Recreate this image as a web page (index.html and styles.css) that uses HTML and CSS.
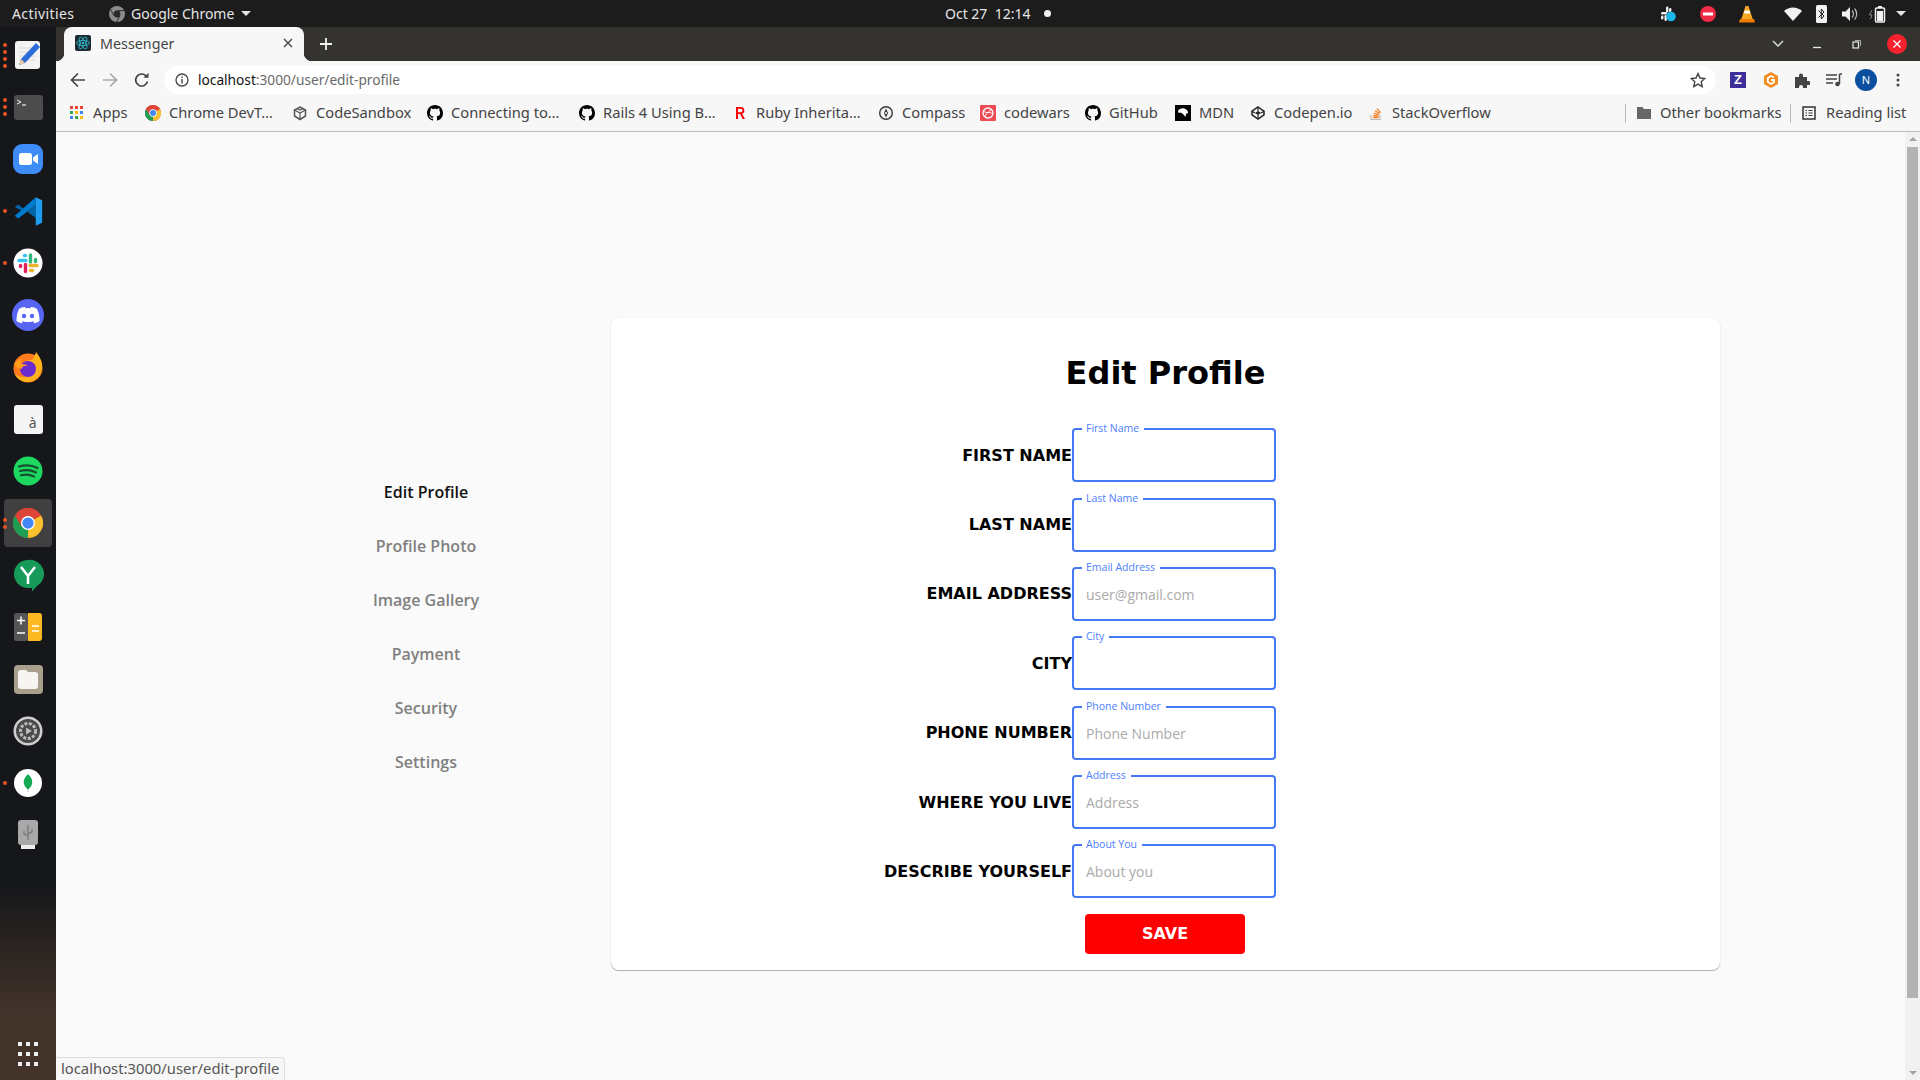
FILE: index.html
```html
<!DOCTYPE html>
<html lang="en">
<head>
    <meta charset="UTF-8">
    <meta name="viewport" content="width=device-width, initial-scale=1.0">
    <title>Messenger</title>
    <link rel="stylesheet" href="styles.css">
</head>
<body>
    <svg class="defs" width="0" height="0">
        <symbol id="gh" viewBox="0 0 16 16">
            <path d="M8 0C3.58 0 0 3.58 0 8c0 3.54 2.29 6.53 5.47 7.59.4.07.55-.17.55-.38 0-.19-.01-.82-.01-1.49-2.01.37-2.53-.49-2.69-.94-.09-.23-.48-.94-.82-1.13-.28-.15-.68-.52-.01-.53.63-.01 1.08.58 1.23.82.72 1.21 1.87.87 2.33.66.07-.52.28-.87.51-1.07-1.78-.2-3.64-.89-3.64-3.95 0-.87.31-1.59.82-2.15-.08-.2-.36-1.02.08-2.12 0 0 .67-.21 2.2.82.64-.18 1.32-.27 2-.27.68 0 1.36.09 2 .27 1.53-1.04 2.2-.82 2.2-.82.44 1.1.16 1.92.08 2.12.51.56.82 1.27.82 2.15 0 3.07-1.87 3.75-3.65 3.95.29.25.54.73.54 1.48 0 1.07-.01 1.93-.01 2.2 0 .21.15.46.55.38A8.013 8.013 0 0016 8c0-4.42-3.58-8-8-8z"/>
        </symbol>
        <symbol id="chrome" viewBox="0 0 32 32">
            <circle cx="16" cy="16" r="16" fill="#db4437"/>
            <path d="M16 16 29.9 8A16 16 0 0 1 16 32Z" fill="#fbc02d"/>
            <path d="M16 16 16 32A16 16 0 0 1 2.1 8Z" fill="#1e9e52"/>
            <path d="M16 8H29.9A16 16 0 0 0 2.1 8L9 20Z" fill="#db4437"/>
            <circle cx="16" cy="16" r="7.5" fill="#fff"/>
            <circle cx="16" cy="16" r="6" fill="#4285f4"/>
        </symbol>
    </svg>

    <header class="topbar">
        <span class="activities">Activities</span>
        <span class="appmenu">
            <svg class="appicon" width="18" height="18" viewBox="0 0 18 18"><circle cx="9" cy="9" r="8" fill="#8d8d8d"/><circle cx="9" cy="9" r="3.4" fill="#2a2a2a"/><path d="M9 5.6h7M6 10.7 2.6 4.5M12 10.7 8.5 17" stroke="#2a2a2a" stroke-width="1"/></svg>
            Google Chrome
            <i class="caret"></i>
        </span>
        <span class="clock">Oct 27&nbsp; 12:14<i class="clockdot"></i></span>
        <span class="tray">
            <svg class="t-slack" width="18" height="18" viewBox="0 0 18 18"><g fill="#eee"><rect x="2" y="7" width="6" height="2.4" rx="1.2"/><rect x="7" y="1.5" width="2.4" height="6" rx="1.2"/><rect x="10" y="3" width="2.4" height="4" rx="1.2"/><rect x="2" y="10.500" width="2.400" height="4" rx="1.2"/><rect x="5.500" y="10" width="2.400" height="6" rx="1.2"/></g><circle cx="12" cy="11.500" r="4.800" fill="#1ab7ea"/></svg>
            <svg class="t-block" width="16" height="16" viewBox="0 0 16 16"><circle cx="8" cy="8" r="8" fill="#ef2b45"/><rect x="3" y="6.500" width="10" height="3" fill="#fff"/></svg>
            <svg class="t-vlc" width="16" height="18" viewBox="0 0 16 18"><path d="M6.500 1h3l4.500 14H2Z" fill="#f5a623"/><path d="M5.700 5.500h4.600l1 3H4.700Z" fill="#fff"/><path d="M1 14h14l1 3.500H0Z" fill="#ef7d00"/></svg>
            <svg class="t-wifi" width="18" height="14" viewBox="0 0 18 14"><path d="M0 4a13 13 0 0 1 18 0L9 14Z" fill="#f2f2f2"/></svg>
            <svg class="t-bt" width="11" height="18" viewBox="0 0 11 18"><rect width="11" height="18" rx="1.500" fill="#f2f2f2"/><path d="M2.500 5.500 8 11l-2.700 3V4L8 7l-5.500 5.500" fill="none" stroke="#222" stroke-width="1"/></svg>
            <svg class="t-vol" width="16" height="14" viewBox="0 0 16 14"><path d="M0 4.500h3.500L8 0v14L3.500 9.500H0Z" fill="#f2f2f2"/><path d="M10 3.500a5 5 0 0 1 0 7M12.500 1.500a8 8 0 0 1 0 11" fill="none" stroke="#bbb" stroke-width="1.200"/></svg>
            <svg class="t-bat" width="18" height="18" viewBox="0 0 18 18"><path d="M3 5 .5 10H3L1.500 14" fill="none" stroke="#888" stroke-width="1"/><rect x="6.500" y="3" width="9" height="14" rx="1" fill="none" stroke="#f2f2f2" stroke-width="1.500"/><rect x="9" y="1" width="4" height="2" fill="#f2f2f2"/><rect x="8" y="6" width="6" height="10" fill="#f2f2f2"/></svg>
            <i class="caret t-caret"></i>
        </span>
    </header>

    <div class="desktop">
        <nav class="dock">
            <div class="dockitem">
                <span class="dots d4"><i></i><i></i><i></i><i></i></span>
                <svg width="38" height="38" viewBox="0 0 38 38"><rect x="6" y="5" width="25" height="28" rx="3" fill="#f3f3f3"/><path d="M10 12h16M10 16h16M10 20h16M10 24h16" stroke="#d8d8d8"/><path d="M27 7l4 4-15 16-6 2 2-6Z" fill="#2a6bd8"/><path d="M10 29l2-6 4 4Z" fill="#edc9a0"/></svg>
            </div>
            <div class="dockitem">
                <span class="dots d3"><i></i><i></i><i></i></span>
                <svg width="38" height="38" viewBox="0 0 38 38"><rect x="5" y="7" width="29" height="25" rx="3" fill="#4c4c4c"/><path d="M8 12l4 2-4 2" fill="none" stroke="#eee"/><path d="M13 17h4" stroke="#eee" stroke-width="1.200"/></svg>
            </div>
            <div class="dockitem">
                <svg width="38" height="38" viewBox="0 0 38 38"><rect x="4" y="4" width="30" height="30" rx="9" fill="#3d8cf7"/><rect x="10" y="13" width="13" height="12" rx="2.500" fill="#fff"/><path d="M24 17.500 29 14v10l-5-3.500Z" fill="#fff"/></svg>
            </div>
            <div class="dockitem">
                <span class="dots d1"><i></i></span>
                <svg width="29" height="29" viewBox="0 0 100 100"><path d="M75 99V72L14 26 3 35 32 50 3 65 14 74 75 28V1Z" fill="#0065a9"/><path d="M75 1V28L14 74 3 65Z" fill="#007acc"/><path d="M75 1 97 11V89L75 99Z" fill="#1f9cf0"/></svg>
            </div>
            <div class="dockitem">
                <span class="dots d1"><i></i></span>
                <svg width="38" height="38" viewBox="0 0 38 38"><circle cx="19" cy="19" r="14.500" fill="#fff"/><g stroke-width="3.400" stroke-linecap="round"><path d="M21.500 11v7" stroke="#2eb67d"/><path d="M26.500 15.500v2" stroke="#2eb67d"/><path d="M21 21.500h7" stroke="#ecb22e"/><path d="M21.500 26.500h2" stroke="#ecb22e"/><path d="M16.500 20.500v7" stroke="#e01e5a"/><path d="M11.500 21.500v1" stroke="#e01e5a"/><path d="M10 16.500h7" stroke="#36c5f0"/><path d="M15.500 11.500h1" stroke="#36c5f0"/></g></svg>
            </div>
            <div class="dockitem">
                <svg width="38" height="38" viewBox="0 0 38 38"><circle cx="19" cy="19" r="16" fill="#5865f2"/><path d="M10 13c3-2 5-2 6-2l.6 1.200a14 14 0 0 1 4.800 0L22 11c1 0 3 0 6 2 2 4 2.500 8 2.500 12-2 1.500-3.800 2-5.200 2.200l-1-1.800 1.500-.9c-4 2-9.600 2-13.600 0l1.500.9-1 1.800c-1.400-.2-3.200-.7-5.200-2.200 0-4 .5-8 2.500-12Z" fill="#fff"/><circle cx="15" cy="20" r="2.200" fill="#5865f2"/><circle cx="23" cy="20" r="2.200" fill="#5865f2"/></svg>
            </div>
            <div class="dockitem">
                <svg width="38" height="38" viewBox="0 0 38 38"><circle cx="19" cy="20" r="14.500" fill="#ff7a1a"/><path d="M27 4c3 4 7 9 6 16-1 9-8 14-14 14S8 31 5 25c3 4 9 5 13 3s5-9 1-12l-5 1c1-4 5-5 9-5 2-2 3-5 4-8Z" fill="#ffb21c"/><circle cx="19" cy="21" r="8" fill="#6a2ccf"/><path d="M5 16c2-3 5-5 8-5-1 2-1 3 0 5 2 0 4 .5 6 1.500-4 0-6 1-6 3-4 1-6-1-8-4.500Z" fill="#ff9a1a"/></svg>
            </div>
            <div class="dockitem">
                <span class="tile">à</span>
            </div>
            <div class="dockitem">
                <svg width="38" height="38" viewBox="0 0 38 38"><circle cx="19" cy="19" r="14.500" fill="#1ed760"/><path d="M10 14.500c6-1.700 13-1.300 18.500 1.500M11 19c5.500-1.400 11-1 16 1.400M12 23.300c4.500-1.100 9-.8 13 1.200" fill="none" stroke="#14502e" stroke-width="2.200" stroke-linecap="round"/></svg>
            </div>
            <div class="dockitem active">
                <span class="dots d2"><i></i><i></i></span>
                <svg width="30" height="30"><use href="#chrome"/></svg>
            </div>
            <div class="dockitem">
                <svg width="38" height="38" viewBox="0 0 38 38"><path d="M19 4a14 14 0 0 0 0 28h4v3.500l5-5.500A14 14 0 0 0 19 4Z" fill="#169a5a"/><path d="M12 11l7 9 7-9M19 20v8" fill="none" stroke="#fff" stroke-width="2.500"/></svg>
            </div>
            <div class="dockitem">
                <svg width="38" height="38" viewBox="0 0 38 38"><rect x="5" y="5" width="14" height="28" rx="2.500" fill="#555"/><path d="M19 5h11a3 3 0 0 1 3 3v22a3 3 0 0 1-3 3H19Z" fill="#fdb921"/><path d="M8 12.500h8M12 8.500v8M8 25h8M23 18h7M23 23h7" stroke="#fff" stroke-width="1.500"/></svg>
            </div>
            <div class="dockitem">
                <svg width="38" height="38" viewBox="0 0 38 38"><rect x="5" y="5" width="29" height="29" rx="4" fill="#a89f8c"/><path d="M9 13a3 3 0 0 1 3-3h5l2 2h7a3 3 0 0 1 3 3v11a3 3 0 0 1-3 3H12a3 3 0 0 1-3-3Z" fill="#f7f5f1"/></svg>
            </div>
            <div class="dockitem">
                <svg width="38" height="38" viewBox="0 0 38 38"><circle cx="19" cy="19" r="14.500" fill="#cfcfcf"/><circle cx="19" cy="19" r="12" fill="#4a4a4a"/><circle cx="19" cy="19" r="7.500" fill="none" stroke="#bbb" stroke-width="3" stroke-dasharray="3 1.500"/><path d="M17 15.500 23 19l-6 3.500Z" fill="#bbb"/></svg>
            </div>
            <div class="dockitem">
                <span class="dots d1"><i></i></span>
                <svg width="38" height="38" viewBox="0 0 38 38"><circle cx="19" cy="19" r="14" fill="#fff"/><path d="M19 10c3 3 5 6 4 10-.7 3-3 4.500-4 5.500-1-1-3.300-2.500-4-5.500-1-4 1-7 4-10Z" fill="#13aa52"/><path d="M19 25v3" stroke="#b8c4c2"/></svg>
            </div>
            <div class="dockitem">
                <svg width="38" height="38" viewBox="0 0 38 38"><rect x="9" y="4" width="20" height="25" rx="3" fill="#a8a8a8"/><rect x="12" y="29" width="14" height="4" fill="#eee"/><path d="M19 9v15M19 20l-4-2v-3M19 18l4-2v-3" fill="none" stroke="#7d7d7d" stroke-width="1.500"/></svg>
            </div>
            <div class="appgrid">
                <i></i><i></i><i></i><i></i><i></i><i></i><i></i><i></i><i></i>
            </div>
        </nav>

        <div class="window">
            <div class="tabstrip">
                <div class="tab">
                    <svg class="favicon" width="16" height="16" viewBox="0 0 16 16"><rect width="16" height="16" rx="2" fill="#1d2a30"/><g fill="none" stroke="#2fc0d8" stroke-width=".8"><ellipse cx="8" cy="8" rx="6.500" ry="2.600"/><ellipse cx="8" cy="8" rx="6.500" ry="2.600" transform="rotate(60 8 8)"/><ellipse cx="8" cy="8" rx="6.500" ry="2.600" transform="rotate(120 8 8)"/></g><circle cx="8" cy="8" r="1.200" fill="#2fc0d8"/></svg>
                    <span class="tabtitle">Messenger</span>
                    <svg class="tabclose" width="10" height="10" viewBox="0 0 10 10"><path d="M1 1l8 8M9 1l-8 8" stroke="#444" stroke-width="1.400"/></svg>
                </div>
                <svg class="newtab" width="14" height="14" viewBox="0 0 14 14"><path d="M7 1v12M1 7h12" stroke="#f2f2f2" stroke-width="1.800"/></svg>
                <span class="winctl">
                    <svg class="w-chev" width="12" height="8" viewBox="0 0 12 8"><path d="M1 1l5 5 5-5" fill="none" stroke="#e0e0e0" stroke-width="1.400"/></svg>
                    <svg class="w-min" width="10" height="10" viewBox="0 0 10 10"><path d="M1 8.500h8" stroke="#e8e8e8" stroke-width="1.300"/></svg>
                    <svg class="w-max" width="10" height="10" viewBox="0 0 10 10"><rect x="1" y="3" width="5.500" height="6" fill="none" stroke="#e8e8e8" stroke-width="1.200"/><path d="M3 1.500h5.500V7" fill="none" stroke="#aaa"/></svg>
                    <span class="w-close"><svg width="10" height="10" viewBox="0 0 10 10"><path d="M1.500 1.500l7 7M8.500 1.500l-7 7" stroke="#fff" stroke-width="1.400"/></svg></span>
                </span>
            </div>

            <div class="toolbar">
                <svg class="tb-back" width="16" height="16" viewBox="0 0 16 16"><path d="M15 8H2M8 1.500 1.500 8 8 14.500" fill="none" stroke="#444" stroke-width="1.700"/></svg>
                <svg class="tb-fwd" width="16" height="16" viewBox="0 0 16 16"><path d="M1 8h13M8 1.500 14.500 8 8 14.500" fill="none" stroke="#aaa" stroke-width="1.700"/></svg>
                <svg class="tb-reload" width="16" height="16" viewBox="0 0 16 16"><path d="M13.500 9.500A6 6 0 1 1 12 3.800" fill="none" stroke="#444" stroke-width="1.700"/><path d="M9.500 5.800h5v-5Z" fill="#444"/></svg>
                <div class="omnibox">
                    <svg class="infoicon" width="14" height="14" viewBox="0 0 14 14"><circle cx="7" cy="7" r="6" fill="none" stroke="#444" stroke-width="1.300"/><path d="M7 6v4.500M7 3.500v1.400" stroke="#444" stroke-width="1.400"/></svg>
                    <span class="url"><b>localhost</b>:3000/user/edit-profile</span>
                    <svg class="star" width="16" height="16" viewBox="0 0 16 16"><path d="M8 1.500l2 4.500 4.800.5-3.600 3.200 1 4.800L8 12.100l-4.200 2.400 1-4.800L1.200 6.500 6 6Z" fill="none" stroke="#444" stroke-width="1.400"/></svg>
                </div>
                <span class="ext-z">Z</span>
                <svg class="ext-g" width="16" height="18" viewBox="0 0 16 18"><path d="M8 1l7 4v8l-7 4-7-4V5Z" fill="#f58a1f"/><path d="M11 6.500 8 5 4.800 7v4L8 13l3-1.800V9H8" fill="none" stroke="#fff" stroke-width="1.800"/></svg>
                <svg class="ext-p" width="16" height="16" viewBox="0 0 16 16"><path d="M1 5h4V3.500a2 2 0 0 1 4 0V5h4v4h1.500a2 2 0 0 1 0 4H13v3H9v-1a2 2 0 0 0-4 0v1H1Z" fill="#444"/></svg>
                <svg class="ext-m" width="16" height="14" viewBox="0 0 16 14"><path d="M0 2h11M0 6h11M0 10h7" stroke="#444" stroke-width="1.500"/><path d="M13.500 1v10" stroke="#444" stroke-width="1.500"/><path d="M13.500 1H16" stroke="#444" stroke-width="1.500"/><circle cx="11.500" cy="11" r="2.300" fill="#444"/></svg>
                <span class="avatar">N</span>
                <svg class="menu" width="4" height="14" viewBox="0 0 4 14"><circle cx="2" cy="2" r="1.500" fill="#444"/><circle cx="2" cy="7" r="1.500" fill="#444"/><circle cx="2" cy="12" r="1.500" fill="#444"/></svg>
            </div>

            <div class="bookmarks">
                <div class="bm apps">
                    <svg width="14" height="14" viewBox="0 0 14 14"><g fill="#ea4335"><rect width="3" height="3"/><rect x="5" width="3" height="3"/><rect x="10" width="3" height="3"/></g><g fill="#34a853"><rect y="5" width="3" height="3"/><rect x="5" y="5" width="3" height="3" fill="#fbbc04"/><rect x="10" y="5" width="3" height="3" fill="#4285f4"/></g><g fill="#fbbc04"><rect y="10" width="3" height="3" fill="#4285f4"/><rect x="5" y="10" width="3" height="3" fill="#34a853"/><rect x="10" y="10" width="3" height="3"/></g></svg>
                    <span>Apps</span>
                </div>
                <div class="bm devtools"><svg width="16" height="16"><use href="#chrome"/></svg><span>Chrome DevT…</span></div>
                <div class="bm sandbox"><svg width="16" height="16" viewBox="0 0 16 16"><path d="M8 2l5.500 3v6L8 14.500 2.500 11V5Z" fill="none" stroke="#555" stroke-width="1.500"/><path d="M2.500 5 8 8l5.500-3M8 8v6.500M5 3.500 8 5l3-1.500" fill="none" stroke="#555" stroke-width="1.200"/></svg><span>CodeSandbox</span></div>
                <div class="bm conn"><svg width="16" height="16"><use href="#gh"/></svg><span>Connecting to…</span></div>
                <div class="bm rails"><svg width="16" height="16"><use href="#gh"/></svg><span>Rails 4 Using B…</span></div>
                <div class="bm ruby"><svg width="16" height="16" viewBox="0 0 16 16"><path d="M4 2h5a3.500 3.500 0 0 1 1 6.800L13 14h-2.200L8 9H6v5H4Zm2 1.800V7.300h2.800a1.750 1.750 0 0 0 0-3.500Z" fill="#f00"/></svg><span>Ruby Inherita…</span></div>
                <div class="bm compass"><svg width="16" height="16" viewBox="0 0 16 16"><circle cx="8" cy="8" r="6.300" fill="none" stroke="#333" stroke-width="1.400"/><path d="M8 3.500 10 8l-2 4.500L6 8Z" fill="#333"/><circle cx="8" cy="8" r="1" fill="#fff"/></svg><span>Compass</span></div>
                <div class="bm cw"><svg width="16" height="16" viewBox="0 0 16 16"><rect width="16" height="16" rx="1" fill="#ec4a55"/><circle cx="8" cy="8" r="5" fill="none" stroke="#fff" stroke-width="1.300"/><path d="M3.500 6c3 3 6 0 9 3M5 12c0-3 5-5 6-8" fill="none" stroke="#fff"/></svg><span>codewars</span></div>
                <div class="bm ghb"><svg width="16" height="16"><use href="#gh"/></svg><span>GitHub</span></div>
                <div class="bm mdn"><svg width="16" height="16" viewBox="0 0 16 16"><rect width="16" height="16" fill="#000"/><path d="M3 6c1-2 4-3 6-2.500 2 .5 4 2 4 4 0 1-1 1.500-2 1l-.5 3.500L8 9 5.500 7.500 3.500 8Z" fill="#fff"/></svg><span>MDN</span></div>
                <div class="bm cp"><svg width="16" height="16" viewBox="0 0 16 16"><path d="M8 2l6 4.200v3.600L8 14 2 9.800V6.200Z" fill="none" stroke="#222" stroke-width="1.500"/><path d="M8 6 5 8l3 2 3-2Z" fill="#222"/><path d="M8 2v4M8 10v4M2 6.200 5 8M14 6.200 11 8" stroke="#222" stroke-width="1.200"/></svg><span>Codepen.io</span></div>
                <div class="bm so"><svg width="16" height="16" viewBox="0 0 16 16"><path d="M3 10v4.500h9V10" fill="none" stroke="#bbb" stroke-width="1.200"/><path d="M5 12.500h5.500M5.200 10.500l5.400.6M5.800 8.200l5.200 1.500M7 5.800l4.700 2.700M8.800 3.600l3.800 4" stroke="#f48024" stroke-width="1.300"/></svg><span>StackOverflow</span></div>
                <i class="bmsep first"></i>
                <div class="bm other"><svg width="16" height="14" viewBox="0 0 16 14"><path d="M1 1h5.500L8 3h7v10H1Z" fill="#666"/></svg><span>Other bookmarks</span></div>
                <i class="bmsep"></i>
                <div class="bm reading"><svg width="16" height="16" viewBox="0 0 16 16"><rect x="2" y="2" width="12" height="12" fill="none" stroke="#333" stroke-width="1.500"/><path d="M4.500 5.500h1.500M7.500 5.500h4M4.500 8h1.500M7.500 8h4M4.500 10.500h1.500M7.500 10.500h4" stroke="#333" stroke-width="1.100"/></svg><span>Reading list</span></div>
            </div>

            <div class="viewport">
                <main class="page">
                    <aside class="sidebar">
                        <a class="navlink current">Edit Profile</a>
                        <a class="navlink">Profile Photo</a>
                        <a class="navlink">Image Gallery</a>
                        <a class="navlink">Payment</a>
                        <a class="navlink">Security</a>
                        <a class="navlink">Settings</a>
                    </aside>
                    <section class="card">
                        <h1 class="cardtitle">Edit Profile</h1>
                        <form class="profileform">
                            <div class="formrow">
                                <label class="rowlabel">FIRST NAME</label>
                                <fieldset class="field"><legend>First Name</legend><input type="text"></fieldset>
                            </div>
                            <div class="formrow">
                                <label class="rowlabel">LAST NAME</label>
                                <fieldset class="field"><legend>Last Name</legend><input type="text"></fieldset>
                            </div>
                            <div class="formrow">
                                <label class="rowlabel">EMAIL ADDRESS</label>
                                <fieldset class="field"><legend>Email Address</legend><input type="text" placeholder="user@gmail.com"></fieldset>
                            </div>
                            <div class="formrow">
                                <label class="rowlabel">CITY</label>
                                <fieldset class="field"><legend>City</legend><input type="text"></fieldset>
                            </div>
                            <div class="formrow">
                                <label class="rowlabel">PHONE NUMBER</label>
                                <fieldset class="field"><legend>Phone Number</legend><input type="text" placeholder="Phone Number"></fieldset>
                            </div>
                            <div class="formrow">
                                <label class="rowlabel">WHERE YOU LIVE</label>
                                <fieldset class="field"><legend>Address</legend><input type="text" placeholder="Address"></fieldset>
                            </div>
                            <div class="formrow">
                                <label class="rowlabel">DESCRIBE YOURSELF</label>
                                <fieldset class="field"><legend>About You</legend><input type="text" placeholder="About you"></fieldset>
                            </div>
                            <button class="savebtn" type="button">SAVE</button>
                        </form>
                    </section>
                </main>
                <div class="scrollbar">
                    <i class="arrow up"></i>
                    <div class="track"><div class="thumb"></div></div>
                    <i class="arrow down"></i>
                </div>
                <div class="statusbubble">localhost:3000/user/edit-profile</div>
            </div>
        </div>
    </div>
</body>
</html>
```

FILE: styles.css
```css
* {
    box-sizing: border-box;
}

html, body {
    margin: 0;
    height: 100%;
}

body {
    width: 1920px;
    height: 1080px;
    overflow: hidden;
    display: flex;
    flex-direction: column;
    font-family: "Noto Sans", sans-serif;
    background: #fafafa;
}

.defs {
    position: absolute;
}

svg {
    display: block;
    flex-shrink: 0;
}

i {
    display: block;
}

/* system top bar */
.topbar {
    height: 27px;
    background: #1c1c1c;
    color: #e6e6e6;
    font-size: 14px;
    display: flex;
    align-items: center;
    position: relative;
    padding-left: 12px;
}

.activities {
    width: 96px;
    letter-spacing: 0.4px;
}

.appmenu {
    display: flex;
    align-items: center;
    gap: 5px;
}

.caret {
    width: 0;
    height: 0;
    border-left: 5px solid transparent;
    border-right: 5px solid transparent;
    border-top: 5px solid #e6e6e6;
    margin-left: 2px;
}

.clock {
    position: absolute;
    left: 945px;
    display: flex;
    align-items: center;
}

.clockdot {
    width: 7px;
    height: 7px;
    border-radius: 50%;
    background: #eee;
    margin-left: 14px;
}

.tray {
    margin-left: auto;
    display: flex;
    align-items: center;
    padding-right: 14px;
}

.t-block { margin-left: 23px; }
.t-vlc { margin-left: 23px; }
.t-wifi { margin-left: 29px; }
.t-bt { margin-left: 14px; }
.t-vol { margin-left: 15px; }
.t-bat { margin-left: 11px; }
.t-caret { margin-left: 9px; }

/* desktop */
.desktop {
    flex: 1;
    display: flex;
    min-height: 0;
}

.dock {
    width: 56px;
    padding-top: 2px;
    background: linear-gradient(#16171a 0, #16171a 860px, #43342b 990px);
    display: flex;
    flex-direction: column;
    align-items: center;
    position: relative;
}

.dockitem {
    width: 48px;
    height: 52px;
    display: flex;
    align-items: center;
    justify-content: center;
    position: relative;
}

.dockitem.active::before {
    content: "";
    position: absolute;
    inset: 2px 0;
    background: #404040;
    border-radius: 4px;
}

.dockitem svg {
    position: relative;
}

.dots {
    position: absolute;
    left: -1px;
    top: 0;
    bottom: 0;
    display: flex;
    flex-direction: column;
    justify-content: center;
    gap: 3px;
    z-index: 1;
}

.dots i {
    width: 4px;
    height: 4px;
    border-radius: 50%;
    background: #e95420;
}

.tile {
    width: 29px;
    height: 29px;
    border-radius: 3px;
    background: #f5f5f5;
    color: #555;
    font-size: 14px;
    display: flex;
    align-items: flex-end;
    justify-content: flex-end;
    padding: 0 6px 2px 0;
}

.appgrid {
    margin-top: auto;
    margin-bottom: 14px;
    width: 20px;
    display: grid;
    grid-template-columns: repeat(3, 4px);
    justify-content: space-between;
    row-gap: 6px;
}

.appgrid i {
    width: 4px;
    height: 4px;
    background: #eee;
}

/* browser chrome */
.window {
    flex: 1;
    min-width: 0;
    display: flex;
    flex-direction: column;
}

.tabstrip {
    height: 34px;
    background: #353330;
    display: flex;
    align-items: flex-end;
    padding-left: 8px;
}

.tab {
    width: 240px;
    height: 34px;
    background: #f7f7f7;
    border-radius: 8px 8px 0 0;
    display: flex;
    align-items: center;
    padding: 0 10px 2px 11px;
    color: #444;
    font-size: 14.3px;
    position: relative;
}

.tab::before, .tab::after {
    content: "";
    position: absolute;
    bottom: 0;
    width: 8px;
    height: 8px;
}

.tab::before {
    left: -8px;
    background: radial-gradient(circle at 0 0, transparent 8px, #f7f7f7 8.5px);
}

.tab::after {
    right: -8px;
    background: radial-gradient(circle at 100% 0, transparent 8px, #f7f7f7 8.5px);
}

.tabtitle {
    margin-left: 9px;
    flex: 1;
}

.tabclose {
    margin-right: 1px;
}

.newtab {
    align-self: center;
    margin-left: 15px;
}

.winctl {
    margin-left: auto;
    align-self: center;
    display: flex;
    align-items: center;
    padding-right: 13px;
}

.w-min { margin-left: 28px; }
.w-max { margin-left: 30px; }

.w-close {
    width: 20px;
    height: 20px;
    margin-left: 25px;
    border-radius: 50%;
    background: #f5222d;
    display: flex;
    align-items: center;
    justify-content: center;
}

.toolbar {
    height: 38px;
    background: #f7f7f7;
    display: flex;
    align-items: center;
    padding: 5px 0 5px 14px;
}

.tb-fwd { margin-left: 16px; }
.tb-reload { margin-left: 16px; }

.omnibox {
    width: 1552px;
    height: 28px;
    margin-left: 14px;
    border-radius: 14px;
    background: #fff;
    display: flex;
    align-items: center;
    padding: 0 10px 0 11px;
}

.url {
    margin: 0 0 2px 9px;
    font-size: 13.7px;
    color: #6a6a6a;
    flex: 1;
}

.url b {
    font-weight: 400;
    color: #111;
}

.ext-z {
    width: 16px;
    height: 16px;
    margin-left: 14px;
    background: #3f2f9b;
    color: #fff;
    font: bold 13px/16px "Liberation Sans", sans-serif;
    text-align: center;
}

.ext-g { margin-left: 17px; }
.ext-p { margin-left: 15px; }
.ext-m { margin-left: 16px; }

.avatar {
    width: 22px;
    height: 22px;
    margin-left: 13px;
    border-radius: 50%;
    background: #0b4fa0;
    color: #fff;
    font-size: 11px;
    line-height: 22px;
    text-align: center;
}

.menu {
    margin-left: 19px;
}

.bookmarks {
    height: 33px;
    background: #f7f7f7;
    border-bottom: 1px solid #bdbdbd;
    display: flex;
    align-items: center;
    padding: 0 0 4px 14px;
    color: #444;
    font-size: 14.7px;
}

.bm {
    display: flex;
    align-items: center;
    gap: 8px;
    white-space: nowrap;
    width: 100px;
}

.bm span {
    margin-bottom: 2px;
}

.bm.apps { width: 75px; gap: 9px; }
.bm.devtools { width: 147px; }
.bm.sandbox { width: 135px; }
.bm.conn { width: 152px; }
.bm.rails { width: 153px; }
.bm.ruby { width: 146px; }
.bm.compass { width: 102px; }
.bm.cw { width: 105px; }
.bm.ghb { width: 90px; }
.bm.mdn { width: 75px; }
.bm.cp { width: 118px; }
.bm.so { width: 257px; }

.bmsep {
    width: 1px;
    height: 19px;
    background: #bbb;
}

.bmsep.first {
    margin-right: 10px;
}

.bm.other { width: 154px; }
.bm.reading { margin-left: 10px; width: auto; gap: 9px; }

/* page */
.viewport {
    flex: 1;
    min-height: 0;
    display: flex;
    position: relative;
}

.page {
    flex: 1;
    background: #fafafa;
    display: flex;
    align-items: flex-start;
    padding: 186px 0 0 185px;
}

.sidebar {
    width: 370px;
    margin-top: 147px;
    display: flex;
    flex-direction: column;
}

.navlink {
    height: 54px;
    line-height: 54px;
    text-align: center;
    font: 600 16px/54px "Open Sans", sans-serif;
    color: #808080;
}

.navlink.current {
    color: #111;
}

.card {
    width: 1109px;
    height: 652px;
    background: #fff;
    border-radius: 8px;
    box-shadow: 0 1px 1px rgba(0, 0, 0, 0.3), 0 0 2px rgba(0, 0, 0, 0.06);
    padding-top: 35px;
}

.cardtitle {
    margin: 0 0 29.3px;
    font: bold 32px/40px "DejaVu Sans", sans-serif;
    text-align: center;
    color: #000;
}

.profileform {
    display: flex;
    flex-direction: column;
    gap: 9.35px;
}

.formrow {
    display: flex;
    align-items: center;
}

.rowlabel {
    width: 461px;
    padding-top: 7px;
    text-align: right;
    font: bold 16px/20px "DejaVu Sans", sans-serif;
    color: #000;
}

.field {
    width: 204px;
    height: 60px;
    margin: 0;
    padding: 0;
    min-width: 0;
    border: 2px solid #4478f5;
    border-radius: 4px;
}

.field legend {
    margin-left: 8px;
    padding: 0 5px 2px 4px;
    font: 10.5px/12px "Open Sans", sans-serif;
    color: #4d80ff;
}

.field input {
    display: block;
    width: 100%;
    height: 39px;
    border: 0;
    outline: 0;
    background: transparent;
    padding: 0 12px;
    font: 14px "Open Sans", sans-serif;
    color: #333;
}

.field input::placeholder {
    color: #aaa;
    opacity: 1;
}

.savebtn {
    width: 160px;
    height: 40px;
    margin: 6px 0 0 474px;
    border: 0;
    border-radius: 4px;
    background: #ff0000;
    color: #fff;
    font: bold 16px "DejaVu Sans", sans-serif;
}

.scrollbar {
    width: 15px;
    background: #f1f1f1;
    display: flex;
    flex-direction: column;
    align-items: center;
}

.arrow {
    width: 0;
    height: 0;
    border-left: 4px solid transparent;
    border-right: 4px solid transparent;
}

.arrow.up {
    margin-top: 5px;
    border-bottom: 4px solid #a3a3a3;
}

.arrow.down {
    margin-bottom: 5px;
    border-top: 4px solid #a3a3a3;
}

.track {
    flex: 1;
    width: 100%;
    padding: 6px 2px 0;
}

.thumb {
    height: 851px;
    background: #b3b3b3;
}

.statusbubble {
    position: absolute;
    left: 0;
    bottom: 0;
    height: 23px;
    width: 229px;
    padding: 0 5px;
    background: #f7f7f7;
    border: 1px solid #ddd;
    border-width: 1px 1px 0 0;
    border-radius: 0 4px 0 0;
    color: #555;
    font-size: 14.8px;
    line-height: 21px;
    white-space: nowrap;
}
```
